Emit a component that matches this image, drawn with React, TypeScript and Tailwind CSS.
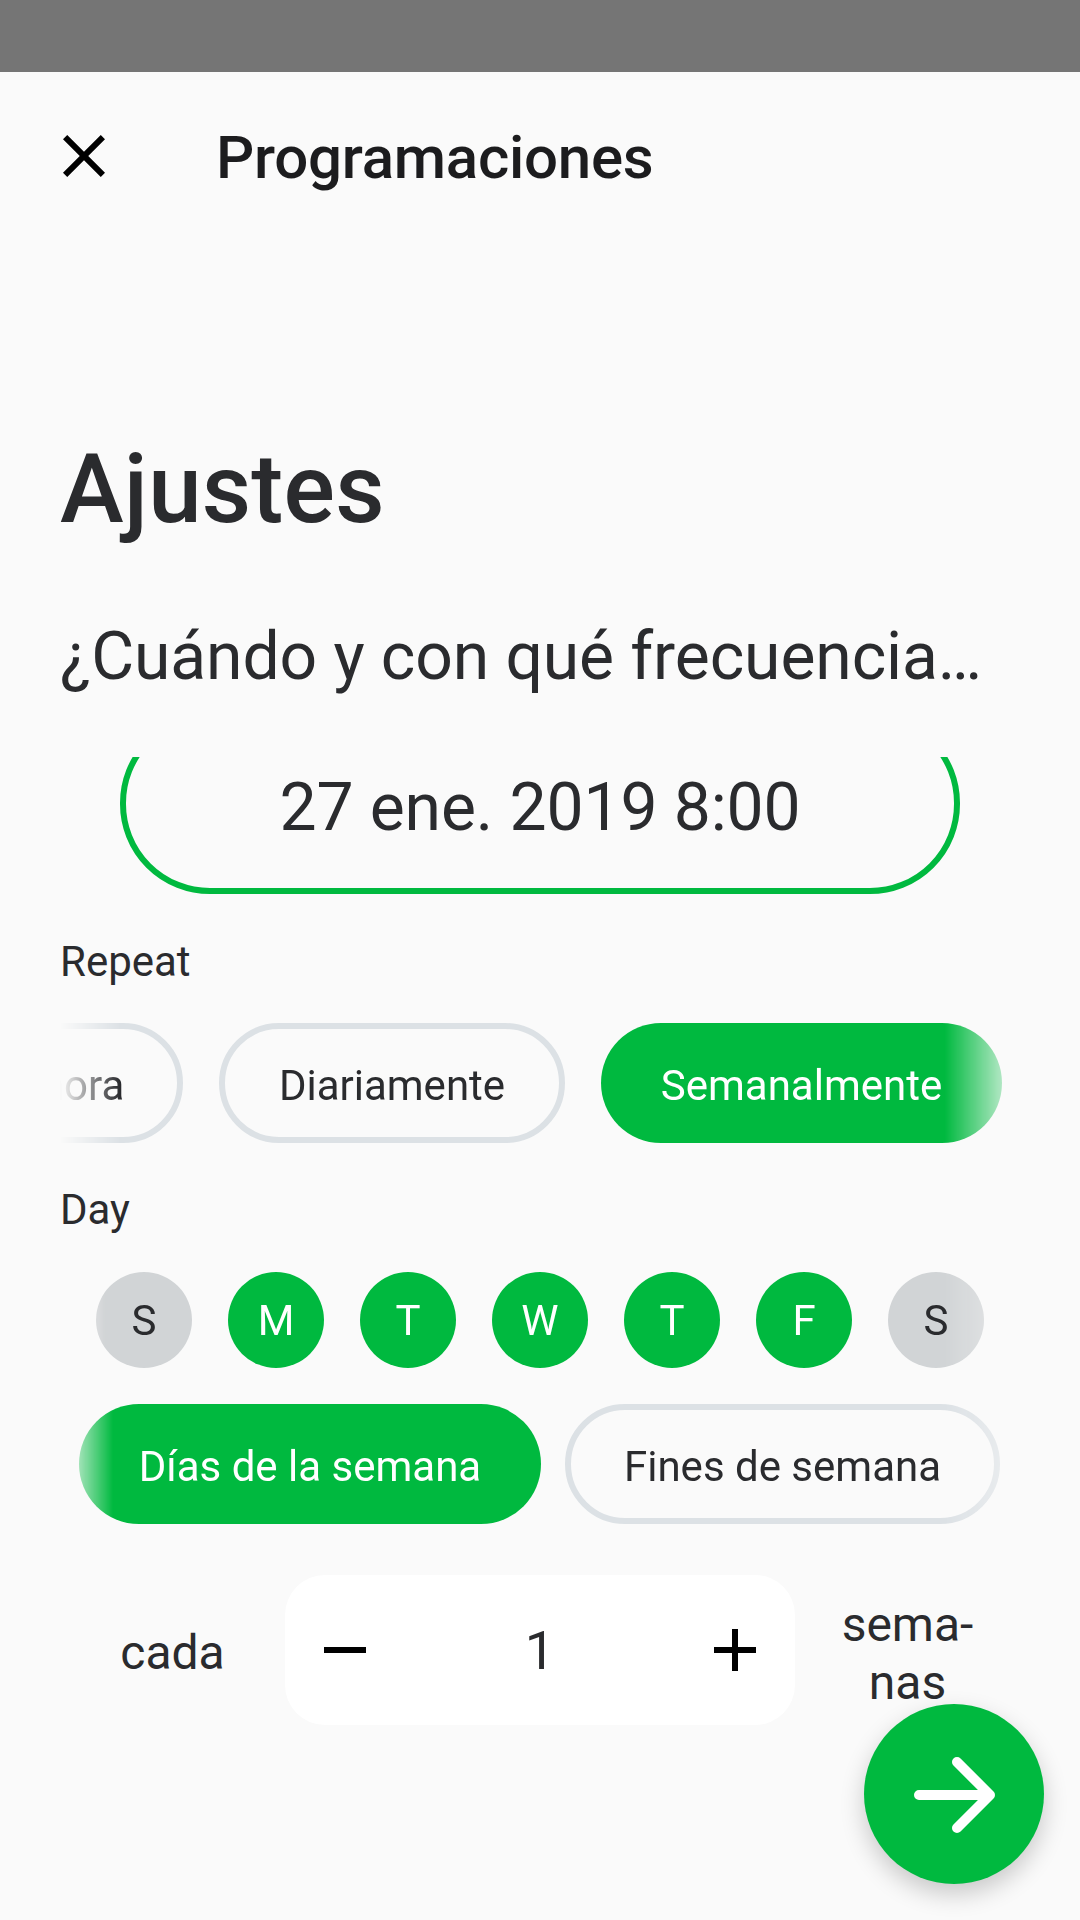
import React from "react";

const days = [
  { label: "S", active: false },
  { label: "M", active: true },
  { label: "T", active: true },
  { label: "W", active: true },
  { label: "T", active: true },
  { label: "F", active: true },
  { label: "S", active: false },
];

const Chip: React.FC<{ label: string; active?: boolean; className?: string }> = ({ label, active, className }) => (
  <div
    className={`h-[120px] shrink-0 rounded-[60px] flex items-center justify-center whitespace-nowrap pt-[5px] text-[42px] leading-none ${
      active ? "bg-[#00b93f] text-white" : "border-[6px] border-[#dce1e5] text-[#2a2b2e]"
    } ${className ?? ""}`}
  >
    {label}
  </div>
);

export default function App() {
  return (
    <div className="relative h-[1920px] w-[1080px] overflow-hidden bg-[#fafafa] font-['Roboto',sans-serif] text-[#2a2b2e]">
      <div className="h-[72px] bg-[#757575]" />

      {/* Header */}
      <div className="flex h-[168px] items-center pl-[48px]">
        <svg width="72" height="72" viewBox="0 0 24 24" className="mr-[96px] shrink-0">
          <path d="M19 6.41L17.59 5 12 10.59 6.41 5 5 6.41 10.59 12 5 17.59 6.41 19 12 13.41 17.59 19 19 17.59 13.41 12z" fill="#000" />
        </svg>
        <h1 className="pt-[3px] text-[60px] font-medium leading-none tracking-[-0.25px] text-[#1c1c1e]">Programaciones</h1>
      </div>

      <div className="px-[60px] pt-[193px]">
        <h2 className="text-[96px] font-medium leading-[112px] tracking-[0.2px]">Ajustes</h2>
        <p className="mt-[74px] whitespace-nowrap text-[66px] leading-[76px] tracking-[-0.1px]">¿Cuándo y con qué frecuencia…</p>
      </div>

      {/* Date pill, clipped by the scroll area */}
      <div className="mt-[62px] h-[137px] overflow-hidden px-[120px]">
        <div className="-mt-[44px] flex h-[181px] items-center justify-center rounded-[90px] border-[6px] border-[#00b93f] text-[66px] leading-none">
          <span className="mt-[8px] tracking-[-0.1px]">27 ene. 2019 8:00</span>
        </div>
      </div>

      <div className="mt-[43px] pl-[60px] text-[42px] leading-[50px]">Repeat</div>

      {/* Repeat options */}
      <div className="mt-[36px] ml-[60px] flex w-[960px] justify-end gap-[36px] overflow-hidden pr-[18px] [mask-image:linear-gradient(to_right,transparent,black_60px,black_885px,rgba(0,0,0,0.07)_960px)]">
        <Chip label="Cada hora" className="w-[308px]" />
        <Chip label="Diariamente" className="w-[346px]" />
        <Chip label="Semanalmente" active className="w-[401px]" />
      </div>

      <div className="mt-[42px] pl-[60px] text-[42px] leading-[50px]">Day</div>

      {/* Week days */}
      <div className="mt-[37px] ml-[60px] flex w-[960px] justify-center gap-[36px] [mask-image:linear-gradient(to_right,transparent,black_45px,black_885px,rgba(0,0,0,0.45)_960px)]">
        {days.map((d, i) => (
          <div
            key={i}
            className={`flex h-[96px] w-[96px] items-center justify-center rounded-full pt-[2px] text-[42px] leading-none ${
              d.active ? "bg-[#00b93f] text-white" : "bg-[#d1d4d6]"
            }`}
          >
            {d.label}
          </div>
        ))}
      </div>

      {/* Presets */}
      <div className="mt-[36px] ml-[60px] flex w-[960px] gap-[24px] overflow-hidden pl-[19px] [mask-image:linear-gradient(to_right,transparent,black_53px,black_885px,rgba(0,0,0,0.45)_960px)]">
        <Chip label="Días de la semana" active className="w-[462px]" />
        <Chip label="Fines de semana" className="w-[435px]" />
      </div>

      {/* Interval stepper */}
      <div className="mt-[51px] flex items-center">
        <div className="w-[285px] pl-[60px] pt-[5px] text-center text-[48px] leading-none">cada</div>
        <div className="flex h-[150px] w-[510px] items-center justify-between rounded-[40px] bg-white px-[24px]">
          <svg width="72" height="72" viewBox="0 0 24 24">
            <path d="M19 13H5v-2h14v2z" fill="#000" />
          </svg>
          <span className="pt-[2px] text-[54px] leading-none">1</span>
          <svg width="72" height="72" viewBox="0 0 24 24">
            <path d="M19 13h-6v6h-2v-6H5v-2h6V5h2v6h6v2z" fill="#000" />
          </svg>
        </div>
        <div className="w-[225px] pt-[7px] text-center text-[48px] leading-[58px]">
          sema-
          <br />
          nas
        </div>
      </div>

      {/* Next button */}
      <div className="absolute left-[864px] top-[1704px] h-[180px] w-[180px] rounded-full bg-[#00b93f] shadow-[0_10px_24px_rgba(0,0,0,0.2)]">
        <svg width="180" height="180" viewBox="0 0 180 180">
          <path d="M55 91 H126 M93 58 L126 91 L93 124" stroke="#fff" strokeWidth="10" strokeLinecap="round" strokeLinejoin="round" fill="none" />
        </svg>
      </div>
    </div>
  );
}
